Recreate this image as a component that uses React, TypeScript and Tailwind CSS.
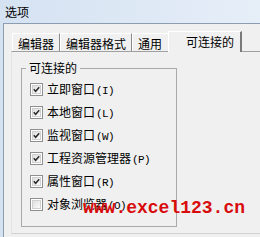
import React from "react";

const cjk = "font-['Noto_Sans_CJK_SC','Noto_Sans',sans-serif]";
const mono = "font-['Liberation_Mono',monospace]";

const items = [
  { label: "立即窗口", key: "(I)", checked: true },
  { label: "本地窗口", key: "(L)", checked: true },
  { label: "监视窗口", key: "(W)", checked: true },
  { label: "工程资源管理器", key: "(P)", checked: true },
  { label: "属性窗口", key: "(R)", checked: true },
  { label: "对象浏览器", key: "(O)", checked: false },
];

function CheckBox({ checked }: { checked: boolean }) {
  return (
    <span className="w-[13px] h-[13px] border border-[#8e8f8f] bg-white p-[1px] shrink-0">
      <span className="flex items-center justify-center w-full h-full border border-[#d0d0d0] bg-gradient-to-br from-[#dedede] to-[#fbfbfb]">
        {checked && (
          <svg width="9" height="9" viewBox="0 0 9 9">
            <path d="M1 4.2 L3.4 6.8 L8 1.6" fill="none" stroke="#2a2a2a" strokeWidth="1.9" />
          </svg>
        )}
      </span>
    </span>
  );
}

export default function App() {
  return (
    <div className={`relative w-[260px] h-[237px] overflow-hidden bg-gradient-to-r from-[#d5e2f2] to-[#e6eef8] text-black ${cjk}`}>
      <div className="h-[23px] pl-[5px] pt-[5px] text-[12px] leading-[14px]">选项</div>

      <div className="ml-[3px] h-[214px] border-l border-t border-[#8c9db2] bg-[#f0f0f0] pt-[7px]">
        {/* tab strip */}
        <div className="flex items-end h-[20px] pl-[8px] text-[12px] leading-[14px]">
          <div className="w-[48px] h-[18px] pt-[3px] text-center border-t border-l border-white border-r border-r-[#8a8a8a]">编辑器</div>
          <div className="w-[72px] h-[18px] pt-[3px] text-center border-t border-l border-white border-r border-r-[#8a8a8a]">编辑器格式</div>
          <div className="w-[38px] h-[18px] pt-[3px] pl-[5px] border-t border-l border-white">通用</div>
          <div className="relative z-10 -ml-[2px] -mb-[1px] w-[74px] h-[21px] pt-[3px] pl-[17px] bg-[#f0f0f0] border-t border-l border-white border-r-2 border-r-[#7a7a7a]">
            可连接的
          </div>
        </div>

        {/* tab panel */}
        <div className="ml-[7px] h-[183px] border-t border-l border-t-[#a0a0a0] border-l-[#e4e4e4] border-b border-b-[#d0d0d0] pt-[9px]">
          <fieldset className="ml-[9px] w-[156px] h-[166px] border border-[#a9a9a9]">
            <legend className="ml-[4px] px-[3px] text-[12px] leading-[14px]">可连接的</legend>
            <div className="pl-[8px] pt-[3px]">
              {items.map((it) => (
                <div key={it.label} className="flex items-center h-[23px] gap-[4px]">
                  <CheckBox checked={it.checked} />
                  <span className="flex items-baseline text-[12px] leading-[14px] whitespace-nowrap">
                    <span>{it.label}</span>
                    <span className={`${mono} text-[11px] tracking-[-0.6px] ml-[1px]`}>{it.key}</span>
                  </span>
                </div>
              ))}
            </div>
          </fieldset>
        </div>
      </div>

      <div className={`absolute left-[83px] top-[199px] ${mono} font-bold text-[18px] leading-[18px] text-[#d80c0c] whitespace-nowrap`}>
        www.excel123.cn
      </div>
    </div>
  );
}
